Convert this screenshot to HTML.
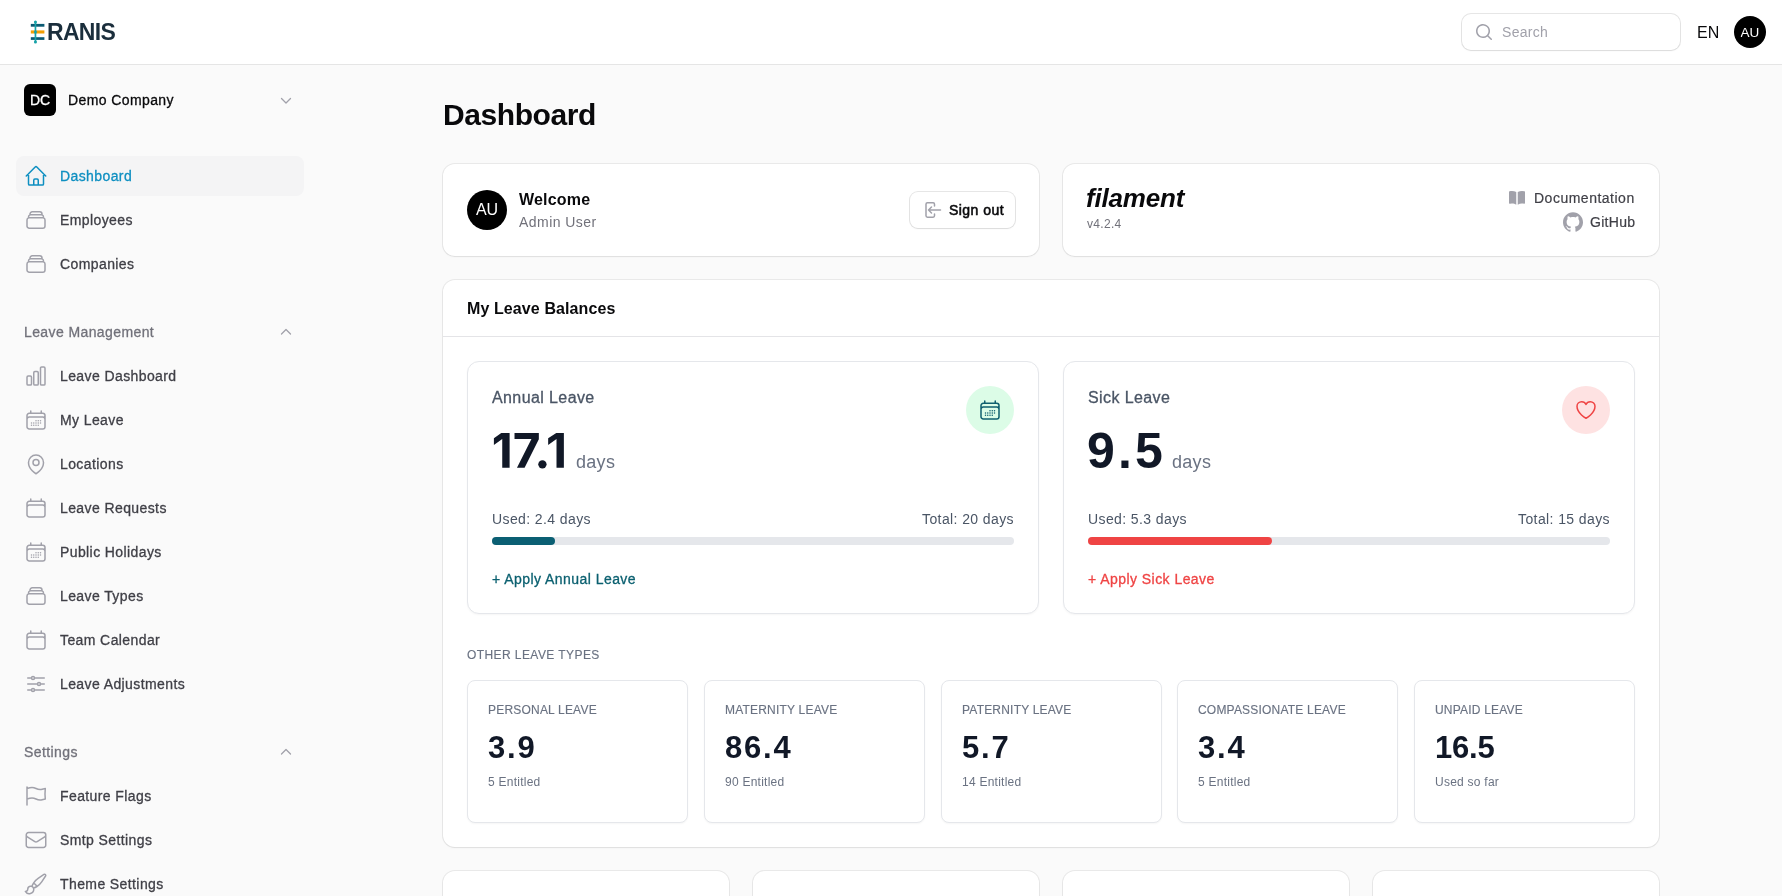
<!DOCTYPE html><html><head><meta charset="utf-8"><style>
html,body{margin:0;padding:0;width:1782px;height:896px;overflow:hidden;background:#fafafa;font-family:"Liberation Sans",sans-serif;}
.t{position:absolute;line-height:1;white-space:nowrap;will-change:transform;}
.card{position:absolute;background:#fff;border-radius:12px;box-shadow:0 0 0 1px rgba(9,9,11,0.07),0 1px 2px 0 rgba(0,0,0,0.05);}
.ic{position:absolute;background:#fff;border:1px solid #e5e7eb;border-radius:12px;box-sizing:border-box;box-shadow:0 1px 2px 0 rgba(0,0,0,0.04);}
.sc{position:absolute;background:#fff;border:1px solid #e5e7eb;border-radius:8px;box-sizing:border-box;box-shadow:0 1px 2px 0 rgba(0,0,0,0.04);}
</style></head><body>
<div style="position:absolute;left:0px;top:0px;width:1782px;height:64px;background:#fff;"></div>
<div style="position:absolute;left:0px;top:64px;width:1782px;height:1px;background:#e5e5e5;"></div>
<svg style="position:absolute;left:30px;top:20px" width="16" height="24" viewBox="0 0 16 24"><rect x="0.8" y="3.9" width="13.6" height="2.8" fill="#0b5a73"/><rect x="0.8" y="10.4" width="13.6" height="3.1" fill="#f29f05"/><rect x="0.8" y="17.2" width="13.6" height="2.7" fill="#0b5a73"/><rect x="4.6" y="1.5" width="1.7" height="21" fill="#17a2a8"/><circle cx="5.45" cy="1.9" r="1.5" fill="#17a2a8"/><circle cx="5.45" cy="12" r="1.5" fill="#17a2a8"/><circle cx="5.45" cy="22" r="1.5" fill="#17a2a8"/></svg>
<div class="t" style="top:21.13px;font-size:23px;font-weight:700;color:#1b2e3c;letter-spacing:-0.7px;left:47px;">RANIS</div>
<div style="position:absolute;left:1462px;top:14px;width:218px;height:36px;box-sizing:border-box;border-radius:9px;box-shadow:0 0 0 1px rgba(9,9,11,0.1),0 1px 2px rgba(0,0,0,0.05);background:#fff"></div>
<svg style="position:absolute;left:1474px;top:22px" width="20" height="20" viewBox="0 0 20 20" fill="#a1a1aa" stroke="none" stroke-width="1.5" stroke-linecap="round" stroke-linejoin="round" ><path fill-rule="evenodd" d="M9 3.5a5.5 5.5 0 1 0 0 11 5.5 5.5 0 0 0 0-11ZM2 9a7 7 0 1 1 12.452 4.391l3.328 3.329a.75.75 0 1 1-1.06 1.06l-3.329-3.328A7 7 0 0 1 2 9Z"/></svg>
<div class="t" style="top:25.15px;font-size:14px;font-weight:400;color:#a1a1aa;letter-spacing:0.3px;left:1502px;">Search</div>
<div class="t" style="top:24.85px;font-size:16px;font-weight:400;color:#09090b;left:1697px;">EN</div>
<div style="position:absolute;left:1734px;top:16px;width:32px;height:32px;background:#000;border-radius:50%;"></div>
<div class="t" style="top:25.57px;font-size:13.5px;font-weight:400;color:#fff;left:1750px;transform:translateX(-50%);">AU</div>
<div style="position:absolute;left:24px;top:84px;width:32px;height:32px;background:#000;border-radius:6px;"></div>
<div class="t" style="top:93.15px;font-size:14px;font-weight:400;color:#fff;-webkit-text-stroke:0.3px #fff;left:40px;transform:translateX(-50%);">DC</div>
<div class="t" style="top:93.45px;font-size:14px;font-weight:400;color:#09090b;-webkit-text-stroke:0.3px #09090b;letter-spacing:0.4px;left:67.5px;">Demo Company</div>
<svg style="position:absolute;left:276px;top:90px" width="20" height="20" viewBox="0 0 20 20" fill="none" stroke="#a1a1aa" stroke-width="1.3" stroke-linecap="round" stroke-linejoin="round" ><path d="M5.5 8.5 10 13l4.5-4.5"/></svg>
<div style="position:absolute;left:16px;top:156px;width:288px;height:40px;background:#f4f4f5;border-radius:8px;"></div>
<svg style="position:absolute;left:24px;top:164px" width="24" height="24" viewBox="0 0 24 24" fill="none" stroke="#0e8fc1" stroke-width="1.5" stroke-linecap="round" stroke-linejoin="round" ><path d="m2.25 12 8.954-8.955c.44-.439 1.152-.439 1.591 0L21.75 12M4.5 9.75v10.125c0 .621.504 1.125 1.125 1.125H9.75v-4.875c0-.621.504-1.125 1.125-1.125h2.25c.621 0 1.125.504 1.125 1.125V21h4.125c.621 0 1.125-.504 1.125-1.125V9.75M8.25 21h8.25"/></svg>
<div class="t" style="top:169.15px;font-size:14px;font-weight:400;color:#0e8fc1;-webkit-text-stroke:0.3px #0e8fc1;letter-spacing:0.4px;left:60px;">Dashboard</div>
<svg style="position:absolute;left:24px;top:208px" width="24" height="24" viewBox="0 0 24 24" fill="none" stroke="#a1a1aa" stroke-width="1.5" stroke-linecap="round" stroke-linejoin="round" ><path d="M6 6.878V6a2.25 2.25 0 0 1 2.25-2.25h7.5A2.25 2.25 0 0 1 18 6v.878m-12 0c.235-.083.487-.128.75-.128h10.5c.263 0 .515.045.75.128m-12 0A2.25 2.25 0 0 0 4.5 9v.878m13.5-3A2.25 2.25 0 0 1 19.5 9v.878m0 0a2.246 2.246 0 0 0-.75-.128H5.25c-.263 0-.515.045-.75.128m15 0A2.25 2.25 0 0 1 21 12v6a2.25 2.25 0 0 1-2.25 2.25H5.25A2.25 2.25 0 0 1 3 18v-6c0-.98.626-1.813 1.5-2.122"/></svg>
<div class="t" style="top:213.15px;font-size:14px;font-weight:400;color:#3f3f46;-webkit-text-stroke:0.3px #3f3f46;letter-spacing:0.4px;left:60px;">Employees</div>
<svg style="position:absolute;left:24px;top:252px" width="24" height="24" viewBox="0 0 24 24" fill="none" stroke="#a1a1aa" stroke-width="1.5" stroke-linecap="round" stroke-linejoin="round" ><path d="M6 6.878V6a2.25 2.25 0 0 1 2.25-2.25h7.5A2.25 2.25 0 0 1 18 6v.878m-12 0c.235-.083.487-.128.75-.128h10.5c.263 0 .515.045.75.128m-12 0A2.25 2.25 0 0 0 4.5 9v.878m13.5-3A2.25 2.25 0 0 1 19.5 9v.878m0 0a2.246 2.246 0 0 0-.75-.128H5.25c-.263 0-.515.045-.75.128m15 0A2.25 2.25 0 0 1 21 12v6a2.25 2.25 0 0 1-2.25 2.25H5.25A2.25 2.25 0 0 1 3 18v-6c0-.98.626-1.813 1.5-2.122"/></svg>
<div class="t" style="top:257.15px;font-size:14px;font-weight:400;color:#3f3f46;-webkit-text-stroke:0.3px #3f3f46;letter-spacing:0.4px;left:60px;">Companies</div>
<svg style="position:absolute;left:24px;top:364px" width="24" height="24" viewBox="0 0 24 24" fill="none" stroke="#a1a1aa" stroke-width="1.5" stroke-linecap="round" stroke-linejoin="round" ><path d="M3 13.125C3 12.504 3.504 12 4.125 12h2.25c.621 0 1.125.504 1.125 1.125v6.75C7.5 20.496 6.996 21 6.375 21h-2.25A1.125 1.125 0 0 1 3 19.875v-6.75ZM9.75 8.625c0-.621.504-1.125 1.125-1.125h2.25c.621 0 1.125.504 1.125 1.125v11.25c0 .621-.504 1.125-1.125 1.125h-2.25a1.125 1.125 0 0 1-1.125-1.125V8.625ZM16.5 4.125c0-.621.504-1.125 1.125-1.125h2.25C20.496 3 21 3.504 21 4.125v15.75c0 .621-.504 1.125-1.125 1.125h-2.25a1.125 1.125 0 0 1-1.125-1.125V4.125Z"/></svg>
<div class="t" style="top:369.15px;font-size:14px;font-weight:400;color:#3f3f46;-webkit-text-stroke:0.3px #3f3f46;letter-spacing:0.4px;left:60px;">Leave Dashboard</div>
<svg style="position:absolute;left:24px;top:408px" width="24" height="24" viewBox="0 0 24 24" fill="none" stroke="#a1a1aa" stroke-width="1.5" stroke-linecap="round" stroke-linejoin="round" ><path d="M6.75 3v2.25M17.25 3v2.25M3 18.75V7.5a2.25 2.25 0 0 1 2.25-2.25h13.5A2.25 2.25 0 0 1 21 7.5v11.25m-18 0A2.25 2.25 0 0 0 5.25 21h13.5A2.25 2.25 0 0 0 21 18.75m-18 0v-7.5A2.25 2.25 0 0 1 5.25 9h13.5A2.25 2.25 0 0 1 21 11.25v7.5m-9-6h.008v.008H12v-.008ZM12 15h.008v.008H12V15Zm0 2.25h.008v.008H12v-.008ZM9.75 15h.008v.008H9.75V15Zm0 2.25h.008v.008H9.75v-.008ZM7.5 15h.008v.008H7.5V15Zm0 2.25h.008v.008H7.5v-.008Zm6.75-4.5h.008v.008h-.008v-.008Zm0 2.25h.008v.008h-.008V15Zm0 2.25h.008v.008h-.008v-.008Zm2.25-4.5h.008v.008H16.5v-.008Zm0 2.25h.008v.008H16.5V15Z"/></svg>
<div class="t" style="top:413.15px;font-size:14px;font-weight:400;color:#3f3f46;-webkit-text-stroke:0.3px #3f3f46;letter-spacing:0.4px;left:60px;">My Leave</div>
<svg style="position:absolute;left:24px;top:452px" width="24" height="24" viewBox="0 0 24 24" fill="none" stroke="#a1a1aa" stroke-width="1.5" stroke-linecap="round" stroke-linejoin="round" ><path d="M15 10.5a3 3 0 1 1-6 0 3 3 0 0 1 6 0Z"/><path d="M19.5 10.5c0 7.142-7.5 11.25-7.5 11.25S4.5 17.642 4.5 10.5a7.5 7.5 0 1 1 15 0Z"/></svg>
<div class="t" style="top:457.15px;font-size:14px;font-weight:400;color:#3f3f46;-webkit-text-stroke:0.3px #3f3f46;letter-spacing:0.4px;left:60px;">Locations</div>
<svg style="position:absolute;left:24px;top:496px" width="24" height="24" viewBox="0 0 24 24" fill="none" stroke="#a1a1aa" stroke-width="1.5" stroke-linecap="round" stroke-linejoin="round" ><path d="M6.75 3v2.25M17.25 3v2.25M3 18.75V7.5a2.25 2.25 0 0 1 2.25-2.25h13.5A2.25 2.25 0 0 1 21 7.5v11.25m-18 0A2.25 2.25 0 0 0 5.25 21h13.5A2.25 2.25 0 0 0 21 18.75m-18 0v-7.5A2.25 2.25 0 0 1 5.25 9h13.5A2.25 2.25 0 0 1 21 11.25v7.5"/></svg>
<div class="t" style="top:501.15px;font-size:14px;font-weight:400;color:#3f3f46;-webkit-text-stroke:0.3px #3f3f46;letter-spacing:0.4px;left:60px;">Leave Requests</div>
<svg style="position:absolute;left:24px;top:540px" width="24" height="24" viewBox="0 0 24 24" fill="none" stroke="#a1a1aa" stroke-width="1.5" stroke-linecap="round" stroke-linejoin="round" ><path d="M6.75 3v2.25M17.25 3v2.25M3 18.75V7.5a2.25 2.25 0 0 1 2.25-2.25h13.5A2.25 2.25 0 0 1 21 7.5v11.25m-18 0A2.25 2.25 0 0 0 5.25 21h13.5A2.25 2.25 0 0 0 21 18.75m-18 0v-7.5A2.25 2.25 0 0 1 5.25 9h13.5A2.25 2.25 0 0 1 21 11.25v7.5m-9-6h.008v.008H12v-.008ZM12 15h.008v.008H12V15Zm0 2.25h.008v.008H12v-.008ZM9.75 15h.008v.008H9.75V15Zm0 2.25h.008v.008H9.75v-.008ZM7.5 15h.008v.008H7.5V15Zm0 2.25h.008v.008H7.5v-.008Zm6.75-4.5h.008v.008h-.008v-.008Zm0 2.25h.008v.008h-.008V15Zm0 2.25h.008v.008h-.008v-.008Zm2.25-4.5h.008v.008H16.5v-.008Zm0 2.25h.008v.008H16.5V15Z"/></svg>
<div class="t" style="top:545.15px;font-size:14px;font-weight:400;color:#3f3f46;-webkit-text-stroke:0.3px #3f3f46;letter-spacing:0.4px;left:60px;">Public Holidays</div>
<svg style="position:absolute;left:24px;top:584px" width="24" height="24" viewBox="0 0 24 24" fill="none" stroke="#a1a1aa" stroke-width="1.5" stroke-linecap="round" stroke-linejoin="round" ><path d="M6 6.878V6a2.25 2.25 0 0 1 2.25-2.25h7.5A2.25 2.25 0 0 1 18 6v.878m-12 0c.235-.083.487-.128.75-.128h10.5c.263 0 .515.045.75.128m-12 0A2.25 2.25 0 0 0 4.5 9v.878m13.5-3A2.25 2.25 0 0 1 19.5 9v.878m0 0a2.246 2.246 0 0 0-.75-.128H5.25c-.263 0-.515.045-.75.128m15 0A2.25 2.25 0 0 1 21 12v6a2.25 2.25 0 0 1-2.25 2.25H5.25A2.25 2.25 0 0 1 3 18v-6c0-.98.626-1.813 1.5-2.122"/></svg>
<div class="t" style="top:589.15px;font-size:14px;font-weight:400;color:#3f3f46;-webkit-text-stroke:0.3px #3f3f46;letter-spacing:0.4px;left:60px;">Leave Types</div>
<svg style="position:absolute;left:24px;top:628px" width="24" height="24" viewBox="0 0 24 24" fill="none" stroke="#a1a1aa" stroke-width="1.5" stroke-linecap="round" stroke-linejoin="round" ><path d="M6.75 3v2.25M17.25 3v2.25M3 18.75V7.5a2.25 2.25 0 0 1 2.25-2.25h13.5A2.25 2.25 0 0 1 21 7.5v11.25m-18 0A2.25 2.25 0 0 0 5.25 21h13.5A2.25 2.25 0 0 0 21 18.75m-18 0v-7.5A2.25 2.25 0 0 1 5.25 9h13.5A2.25 2.25 0 0 1 21 11.25v7.5"/></svg>
<div class="t" style="top:633.15px;font-size:14px;font-weight:400;color:#3f3f46;-webkit-text-stroke:0.3px #3f3f46;letter-spacing:0.4px;left:60px;">Team Calendar</div>
<svg style="position:absolute;left:24px;top:672px" width="24" height="24" viewBox="0 0 24 24" fill="none" stroke="#a1a1aa" stroke-width="1.5" stroke-linecap="round" stroke-linejoin="round" ><path d="M10.5 6h9.75M10.5 6a1.5 1.5 0 1 1-3 0m3 0a1.5 1.5 0 1 0-3 0M3.75 6H7.5m3 12h9.75m-9.75 0a1.5 1.5 0 0 1-3 0m3 0a1.5 1.5 0 0 0-3 0m-3.75 0H7.5m9-6h3.75m-3.75 0a1.5 1.5 0 0 1-3 0m3 0a1.5 1.5 0 0 0-3 0m-9.75 0h9.75"/></svg>
<div class="t" style="top:677.15px;font-size:14px;font-weight:400;color:#3f3f46;-webkit-text-stroke:0.3px #3f3f46;letter-spacing:0.4px;left:60px;">Leave Adjustments</div>
<svg style="position:absolute;left:24px;top:784px" width="24" height="24" viewBox="0 0 24 24" fill="none" stroke="#a1a1aa" stroke-width="1.5" stroke-linecap="round" stroke-linejoin="round" ><path d="M3 3v1.5M3 21v-6m0 0 2.77-.693a9 9 0 0 1 6.208.682l.108.054a9 9 0 0 0 6.086.71l3.114-.732a48.524 48.524 0 0 1-.005-10.499l-3.11.732a9 9 0 0 1-6.085-.711l-.108-.054a9 9 0 0 0-6.208-.682L3 4.5M3 15V4.5"/></svg>
<div class="t" style="top:789.15px;font-size:14px;font-weight:400;color:#3f3f46;-webkit-text-stroke:0.3px #3f3f46;letter-spacing:0.4px;left:60px;">Feature Flags</div>
<svg style="position:absolute;left:24px;top:828px" width="24" height="24" viewBox="0 0 24 24" fill="none" stroke="#a1a1aa" stroke-width="1.5" stroke-linecap="round" stroke-linejoin="round" ><path d="M21.75 6.75v10.5a2.25 2.25 0 0 1-2.25 2.25h-15a2.25 2.25 0 0 1-2.25-2.25V6.75m19.5 0A2.25 2.25 0 0 0 19.5 4.5h-15a2.25 2.25 0 0 0-2.25 2.25m19.5 0v.243a2.25 2.25 0 0 1-1.07 1.916l-7.5 4.615a2.25 2.25 0 0 1-2.36 0L3.32 8.91a2.25 2.25 0 0 1-1.07-1.916V6.75"/></svg>
<div class="t" style="top:833.15px;font-size:14px;font-weight:400;color:#3f3f46;-webkit-text-stroke:0.3px #3f3f46;letter-spacing:0.4px;left:60px;">Smtp Settings</div>
<svg style="position:absolute;left:24px;top:872px" width="24" height="24" viewBox="0 0 24 24" fill="none" stroke="#a1a1aa" stroke-width="1.5" stroke-linecap="round" stroke-linejoin="round" ><path d="M9.53 16.122a3 3 0 0 0-5.78 1.128 2.25 2.25 0 0 1-2.4 2.245 4.5 4.5 0 0 0 8.4-2.245c0-.399-.078-.78-.22-1.128Zm0 0a15.998 15.998 0 0 0 3.388-1.62m-5.043-.025a15.994 15.994 0 0 1 1.622-3.395m3.42 3.42a15.995 15.995 0 0 0 4.764-4.648l3.876-5.814a1.151 1.151 0 0 0-1.597-1.597L14.146 6.32a15.996 15.996 0 0 0-4.649 4.763m3.42 3.42a6.776 6.776 0 0 0-3.42-3.42"/></svg>
<div class="t" style="top:877.15px;font-size:14px;font-weight:400;color:#3f3f46;-webkit-text-stroke:0.3px #3f3f46;letter-spacing:0.4px;left:60px;">Theme Settings</div>
<div class="t" style="top:325.15px;font-size:14px;font-weight:400;color:#71717a;-webkit-text-stroke:0.3px #71717a;letter-spacing:0.4px;left:24px;">Leave Management</div>
<svg style="position:absolute;left:276px;top:322px" width="20" height="20" viewBox="0 0 20 20" fill="none" stroke="#a1a1aa" stroke-width="1.3" stroke-linecap="round" stroke-linejoin="round" ><path d="M5.5 12 10 7.5l4.5 4.5"/></svg>
<div class="t" style="top:745.15px;font-size:14px;font-weight:400;color:#71717a;-webkit-text-stroke:0.3px #71717a;letter-spacing:0.4px;left:24px;">Settings</div>
<svg style="position:absolute;left:276px;top:742px" width="20" height="20" viewBox="0 0 20 20" fill="none" stroke="#a1a1aa" stroke-width="1.3" stroke-linecap="round" stroke-linejoin="round" ><path d="M5.5 12 10 7.5l4.5 4.5"/></svg>
<div class="t" style="top:99.80px;font-size:30px;font-weight:700;color:#09090b;letter-spacing:-0.42px;left:443.2px;">Dashboard</div>
<div class="card" style="left:443px;top:164px;width:596px;height:92px"></div>
<div style="position:absolute;left:467px;top:190px;width:40px;height:40px;background:#000;border-radius:50%;"></div>
<div class="t" style="top:202.45px;font-size:16px;font-weight:400;color:#fff;left:487px;transform:translateX(-50%);">AU</div>
<div class="t" style="top:192.35px;font-size:16px;font-weight:700;color:#09090b;letter-spacing:0.2px;left:519px;">Welcome</div>
<div class="t" style="top:214.95px;font-size:14px;font-weight:400;color:#71717a;letter-spacing:0.45px;left:519px;">Admin User</div>
<div style="position:absolute;left:910px;top:192px;width:105px;height:36px;box-sizing:border-box;border-radius:8px;box-shadow:0 0 0 1px rgba(9,9,11,0.1),0 1px 2px rgba(0,0,0,0.05);background:#fff"></div>
<svg style="position:absolute;left:924px;top:201px" width="18" height="18" viewBox="0 0 18 18" fill="none" stroke="#a1a1aa" stroke-width="1.5" stroke-linecap="round" stroke-linejoin="round"><path d="M10.5 5V3.2A1.4 1.4 0 0 0 9.1 1.8H3.4A1.4 1.4 0 0 0 2 3.2v11.6a1.4 1.4 0 0 0 1.4 1.4h5.7a1.4 1.4 0 0 0 1.4-1.4V13"/><path d="M7.5 6 4.5 9l3 3M4.5 9h12"/></svg>
<div class="t" style="top:203.15px;font-size:14px;font-weight:400;color:#09090b;-webkit-text-stroke:0.55px #09090b;letter-spacing:0.45px;left:948.5px;">Sign out</div>
<div class="card" style="left:1063px;top:164px;width:596px;height:92px"></div>
<div class="t" style="top:184.99px;font-size:26px;font-weight:700;color:#09090b;letter-spacing:-0.2px;font-style:italic;left:1086px;">filament</div>
<div class="t" style="top:217.84px;font-size:12px;font-weight:400;color:#71717a;letter-spacing:0.3px;left:1087px;">v4.2.4</div>
<svg style="position:absolute;left:1507px;top:188px" width="20" height="20" viewBox="0 0 20 20" fill="#a1a1aa" stroke="none" stroke-width="1.5" stroke-linecap="round" stroke-linejoin="round" ><path d="M10.75 16.82A7.462 7.462 0 0 1 15 15.5c.71 0 1.396.098 2.046.282A.75.75 0 0 0 18 15.06v-11a.75.75 0 0 0-.546-.721A9.006 9.006 0 0 0 15 3a8.999 8.999 0 0 0-4.25 1.065v12.755ZM9.25 4.065A8.999 8.999 0 0 0 5 3c-.85 0-1.673.118-2.454.339A.75.75 0 0 0 2 4.06v11a.75.75 0 0 0 .954.721A7.506 7.506 0 0 1 5 15.5c1.579 0 3.042.487 4.25 1.32V4.065Z"/></svg>
<div class="t" style="top:191.15px;font-size:14px;font-weight:400;color:#3f3f46;-webkit-text-stroke:0.2px #3f3f46;letter-spacing:0.5px;right:147px;text-align:right;">Documentation</div>
<svg style="position:absolute;left:1563px;top:212px" width="20" height="20" viewBox="0 0 24 24" fill="#a1a1aa" stroke="none" stroke-width="1.5" stroke-linecap="round" stroke-linejoin="round" ><path d="M12 .297c-6.63 0-12 5.373-12 12 0 5.303 3.438 9.8 8.205 11.385.6.113.82-.258.82-.577 0-.285-.01-1.04-.015-2.04-3.338.724-4.042-1.61-4.042-1.61C4.422 18.07 3.633 17.7 3.633 17.7c-1.087-.744.084-.729.084-.729 1.205.084 1.838 1.236 1.838 1.236 1.07 1.835 2.809 1.305 3.495.998.108-.776.417-1.305.76-1.605-2.665-.3-5.466-1.332-5.466-5.93 0-1.31.465-2.38 1.235-3.220-.135-.303-.54-1.523.105-3.176 0 0 1.005-.322 3.3 1.23.96-.267 1.98-.399 3-.405 1.02.006 2.04.138 3 .405 2.28-1.552 3.285-1.23 3.285-1.23.645 1.653.24 2.873.12 3.176.765.84 1.23 1.91 1.23 3.22 0 4.61-2.805 5.625-5.475 5.92.42.36.81 1.096.81 2.22 0 1.606-.015 2.896-.015 3.286 0 .315.21.69.825.57C20.565 22.092 24 17.592 24 12.297c0-6.627-5.373-12-12-12"/></svg>
<div class="t" style="top:215.15px;font-size:14px;font-weight:400;color:#3f3f46;-webkit-text-stroke:0.2px #3f3f46;letter-spacing:0.3px;right:147px;text-align:right;">GitHub</div>
<div class="card" style="left:443px;top:280px;width:1216px;height:567px"></div>
<div style="position:absolute;left:443px;top:336px;width:1216px;height:1px;background:#e4e4e7;"></div>
<div class="t" style="top:301.45px;font-size:16px;font-weight:700;color:#09090b;letter-spacing:0.1px;left:467px;">My Leave Balances</div>
<div class="ic" style="left:467px;top:361px;width:572px;height:253px"></div>
<div class="t" style="top:390.45px;font-size:16px;font-weight:400;color:#4a5565;-webkit-text-stroke:0.3px #4a5565;letter-spacing:0.4px;left:492px;">Annual Leave</div>
<svg style="position:absolute;left:488px;top:428px" width="80" height="44" viewBox="0 0 1629 896" fill="#111827"><polygon points="120,210 270,100 440,100 440,810 290,810 290,225 120,345"/><polygon points="540,100 1035,100 1035,230 745,810 590,810 885,225 540,225"/><circle cx="1108" cy="740" r="85"/><polygon points="1225,210 1390,100 1545,100 1545,810 1395,810 1395,225 1225,345"/></svg>
<div class="t" style="top:452.76px;font-size:18px;font-weight:400;color:#6a7282;letter-spacing:0.3px;left:576px;">days</div>
<div style="position:absolute;left:966px;top:386px;width:48px;height:48px;background:#dcfce7;border-radius:50%;"></div>
<svg style="position:absolute;left:978px;top:398px" width="24" height="24" viewBox="0 0 24 24" fill="none" stroke="#0f5f6f" stroke-width="1.5" stroke-linecap="round" stroke-linejoin="round" ><path d="M6.75 3v2.25M17.25 3v2.25M3 18.75V7.5a2.25 2.25 0 0 1 2.25-2.25h13.5A2.25 2.25 0 0 1 21 7.5v11.25m-18 0A2.25 2.25 0 0 0 5.25 21h13.5A2.25 2.25 0 0 0 21 18.75m-18 0v-7.5A2.25 2.25 0 0 1 5.25 9h13.5A2.25 2.25 0 0 1 21 11.25v7.5m-9-6h.008v.008H12v-.008ZM12 15h.008v.008H12V15Zm0 2.25h.008v.008H12v-.008ZM9.75 15h.008v.008H9.75V15Zm0 2.25h.008v.008H9.75v-.008ZM7.5 15h.008v.008H7.5V15Zm0 2.25h.008v.008H7.5v-.008Zm6.75-4.5h.008v.008h-.008v-.008Zm0 2.25h.008v.008h-.008V15Zm0 2.25h.008v.008h-.008v-.008Zm2.25-4.5h.008v.008H16.5v-.008Zm0 2.25h.008v.008H16.5V15Z"/></svg>
<div class="t" style="top:512.15px;font-size:14px;font-weight:400;color:#4a5565;letter-spacing:0.4px;left:492px;">Used: 2.4 days</div>
<div class="t" style="top:512.15px;font-size:14px;font-weight:400;color:#4a5565;letter-spacing:0.4px;right:768px;text-align:right;">Total: 20 days</div>
<div style="position:absolute;left:492px;top:537px;width:522px;height:8px;background:#e5e7eb;border-radius:4px;"></div>
<div style="position:absolute;left:492px;top:537px;width:63px;height:8px;background:#0b5f73;border-radius:4px;"></div>
<div class="t" style="top:572.15px;font-size:14px;font-weight:400;color:#0b6070;-webkit-text-stroke:0.3px #0b6070;letter-spacing:0.45px;left:492px;">+ Apply Annual Leave</div>
<div class="ic" style="left:1063px;top:361px;width:572px;height:253px"></div>
<div class="t" style="top:390.45px;font-size:16px;font-weight:400;color:#4a5565;-webkit-text-stroke:0.3px #4a5565;letter-spacing:0.4px;left:1088px;">Sick Leave</div>
<div class="t" style="top:426.17px;font-size:50px;font-weight:700;color:#111827;letter-spacing:3.2px;left:1087px;">9.5</div>
<div class="t" style="top:452.76px;font-size:18px;font-weight:400;color:#6a7282;letter-spacing:0.3px;left:1172px;">days</div>
<div style="position:absolute;left:1562px;top:386px;width:48px;height:48px;background:#fee2e2;border-radius:50%;"></div>
<svg style="position:absolute;left:1574px;top:398px" width="24" height="24" viewBox="0 0 24 24" fill="none" stroke="#ef4444" stroke-width="1.5" stroke-linecap="round" stroke-linejoin="round" ><path d="M21 8.25c0-2.485-2.099-4.5-4.688-4.5-1.935 0-3.597 1.126-4.312 2.733-.715-1.607-2.377-2.733-4.313-2.733C5.1 3.75 3 5.765 3 8.25c0 7.22 9 12 9 12s9-4.78 9-12Z"/></svg>
<div class="t" style="top:512.15px;font-size:14px;font-weight:400;color:#4a5565;letter-spacing:0.4px;left:1088px;">Used: 5.3 days</div>
<div class="t" style="top:512.15px;font-size:14px;font-weight:400;color:#4a5565;letter-spacing:0.4px;right:172px;text-align:right;">Total: 15 days</div>
<div style="position:absolute;left:1088px;top:537px;width:522px;height:8px;background:#e5e7eb;border-radius:4px;"></div>
<div style="position:absolute;left:1088px;top:537px;width:184px;height:8px;background:#ef4444;border-radius:4px;"></div>
<div class="t" style="top:572.15px;font-size:14px;font-weight:400;color:#ef4444;-webkit-text-stroke:0.3px #ef4444;letter-spacing:0.45px;left:1088px;">+ Apply Sick Leave</div>
<div class="t" style="top:648.84px;font-size:12px;font-weight:400;color:#6a7282;-webkit-text-stroke:0.15px #6a7282;letter-spacing:0.42px;left:467px;">OTHER LEAVE TYPES</div>
<div class="sc" style="left:467px;top:680px;width:221px;height:143px"></div>
<div class="t" style="top:704.04px;font-size:12px;font-weight:400;color:#6a7282;-webkit-text-stroke:0.15px #6a7282;letter-spacing:0.2px;left:488px;">PERSONAL LEAVE</div>
<div class="t" style="top:731.75px;font-size:31px;font-weight:700;color:#111827;letter-spacing:1.8px;left:488px;">3.9</div>
<div class="t" style="top:776.14px;font-size:12px;font-weight:400;color:#6a7282;letter-spacing:0.25px;left:488px;">5 Entitled</div>
<div class="sc" style="left:704px;top:680px;width:221px;height:143px"></div>
<div class="t" style="top:704.04px;font-size:12px;font-weight:400;color:#6a7282;-webkit-text-stroke:0.15px #6a7282;letter-spacing:0.2px;left:725px;">MATERNITY LEAVE</div>
<div class="t" style="top:731.75px;font-size:31px;font-weight:700;color:#111827;letter-spacing:1.8px;left:725px;">86.4</div>
<div class="t" style="top:776.14px;font-size:12px;font-weight:400;color:#6a7282;letter-spacing:0.25px;left:725px;">90 Entitled</div>
<div class="sc" style="left:941px;top:680px;width:221px;height:143px"></div>
<div class="t" style="top:704.04px;font-size:12px;font-weight:400;color:#6a7282;-webkit-text-stroke:0.15px #6a7282;letter-spacing:0.2px;left:962px;">PATERNITY LEAVE</div>
<div class="t" style="top:731.75px;font-size:31px;font-weight:700;color:#111827;letter-spacing:1.8px;left:962px;">5.7</div>
<div class="t" style="top:776.14px;font-size:12px;font-weight:400;color:#6a7282;letter-spacing:0.25px;left:962px;">14 Entitled</div>
<div class="sc" style="left:1177px;top:680px;width:221px;height:143px"></div>
<div class="t" style="top:704.04px;font-size:12px;font-weight:400;color:#6a7282;-webkit-text-stroke:0.15px #6a7282;letter-spacing:0.2px;left:1198px;">COMPASSIONATE LEAVE</div>
<div class="t" style="top:731.75px;font-size:31px;font-weight:700;color:#111827;letter-spacing:1.8px;left:1198px;">3.4</div>
<div class="t" style="top:776.14px;font-size:12px;font-weight:400;color:#6a7282;letter-spacing:0.25px;left:1198px;">5 Entitled</div>
<div class="sc" style="left:1414px;top:680px;width:221px;height:143px"></div>
<div class="t" style="top:704.04px;font-size:12px;font-weight:400;color:#6a7282;-webkit-text-stroke:0.15px #6a7282;letter-spacing:0.2px;left:1435px;">UNPAID LEAVE</div>
<div class="t" style="top:731.75px;font-size:31px;font-weight:700;color:#111827;letter-spacing:-0.2px;left:1435px;">16.5</div>
<div class="t" style="top:776.14px;font-size:12px;font-weight:400;color:#6a7282;letter-spacing:0.25px;left:1435px;">Used so far</div>
<div class="card" style="left:443px;top:871px;width:286px;height:120px"></div>
<div class="card" style="left:753px;top:871px;width:286px;height:120px"></div>
<div class="card" style="left:1063px;top:871px;width:286px;height:120px"></div>
<div class="card" style="left:1373px;top:871px;width:286px;height:120px"></div>
</body></html>
